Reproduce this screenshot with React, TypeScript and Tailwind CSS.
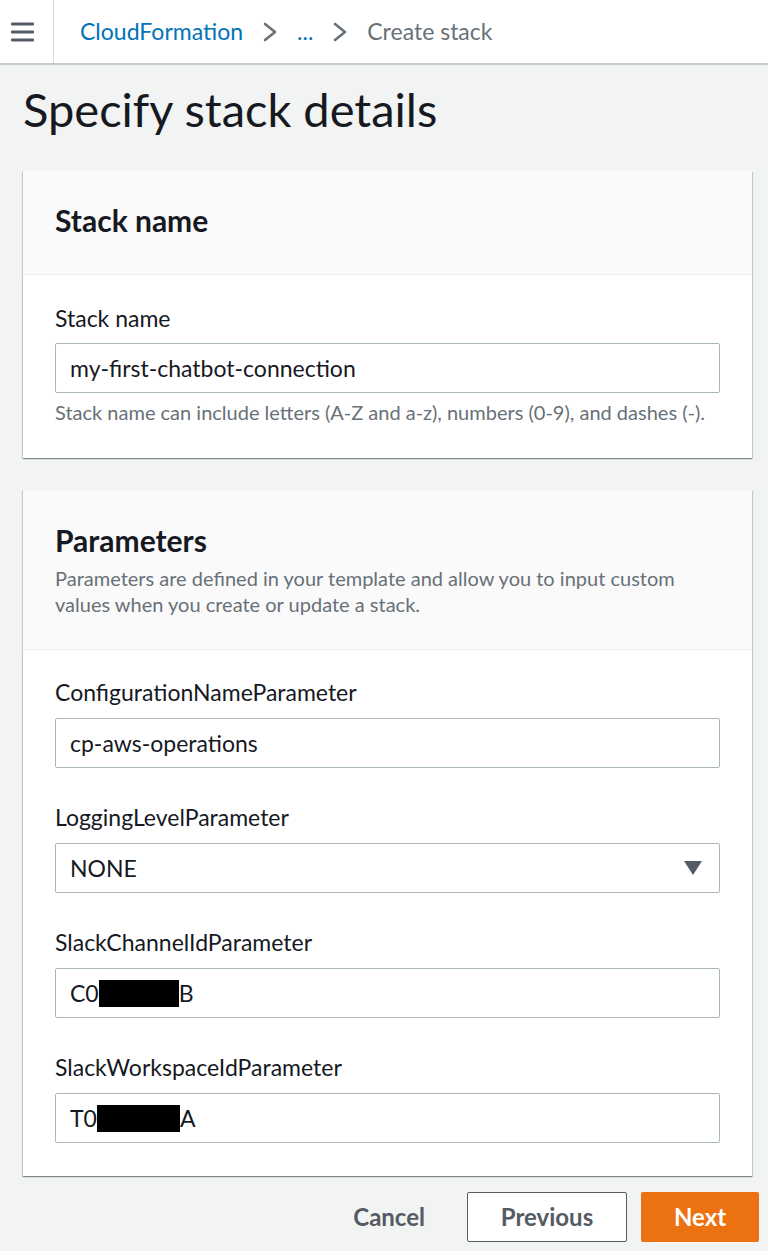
const FONT = "font-['Lato','Noto_Sans',sans-serif]";

function Chevron() {
    return (
        <svg width="16" height="20" viewBox="0 0 16 20" className="mx-[19px] shrink-0">
            <path d="M3 2 L13 10 L3 18" fill="none" stroke="#687078" strokeWidth="2.6" strokeLinecap="round" strokeLinejoin="round" />
        </svg>
    );
}

function Field({ label, value, redact }: { label: string; value?: string; redact?: { pre: string; w: number; post: string } }) {
    return (
        <div>
            <div className="text-[23px] leading-[26px] text-[#16191f] mb-[13px]">{label}</div>
            <div className="h-[50px] border border-[#aab7b8] rounded-[2px] bg-white flex items-center px-[14px] text-[23px] text-[#16191f]">
                {redact ? (
                    <>
                        <span>{redact.pre}</span>
                        <span className="inline-block bg-black h-[27px]" style={{ width: redact.w }} />
                        <span>{redact.post}</span>
                    </>
                ) : value}
            </div>
        </div>
    );
}

export default function App() {
    const cardShadow = 'shadow-[0_1px_1px_0_rgba(0,28,36,0.3),1px_1px_1px_0_rgba(0,28,36,0.15),-1px_1px_1px_0_rgba(0,28,36,0.15)]';

    return (
        <div className={`${FONT} min-h-[1251px] bg-[#f2f3f3] text-[#16191f]`}>
            {/* top bar */}
            <header className="h-[65px] bg-white border-b-2 border-[#c6cbcc] flex items-stretch">
                <div className="w-[54px] border-r border-[#d5dbdb] flex items-center pl-[11px]">
                    <svg width="24" height="20" viewBox="0 0 24 20">
                        <rect x="0" y="0.5" width="23" height="3" rx="1" fill="#545b64" />
                        <rect x="0" y="8.5" width="23" height="3" rx="1" fill="#545b64" />
                        <rect x="0" y="16.5" width="23" height="3" rx="1" fill="#545b64" />
                    </svg>
                </div>
                <nav className="flex items-center pl-[26px] text-[23px]">
                    <span className="text-[#0073bb]">CloudFormation</span>
                    <Chevron />
                    <span className="text-[#0073bb]">...</span>
                    <Chevron />
                    <span className="text-[#687078]">Create stack</span>
                </nav>
            </header>

            <main className="pl-[23px] pr-[16px]">
                <h1 className="pt-[18px] pb-[36px] text-[47px] leading-[52px] font-normal">Specify stack details</h1>

                {/* stack name card */}
                <section className={`bg-white ${cardShadow}`}>
                    <div className="bg-[#fafafa] border-b border-[#eaeded] px-[32px] pt-[33px] pb-[38px]">
                        <h2 className="text-[30px] leading-[32px] font-bold">Stack name</h2>
                    </div>
                    <div className="px-[32px] pt-[30px] pb-[35px]">
                        <div className="text-[23px] leading-[26px] mb-[12px]">Stack name</div>
                        <div className="h-[50px] border border-[#aab7b8] rounded-[2px] flex items-center px-[14px] text-[23px]">
                            my-first-chatbot-connection
                        </div>
                        <p className="mt-[8px] text-[20px] leading-[22px] text-[#687078]">
                            Stack name can include letters (A-Z and a-z), numbers (0-9), and dashes (-).
                        </p>
                    </div>
                </section>

                {/* parameters card */}
                <section className={`mt-[32px] bg-white ${cardShadow}`}>
                    <div className="bg-[#fafafa] border-b border-[#eaeded] px-[32px] pt-[34px] pb-[32px]">
                        <h2 className="text-[30px] leading-[32px] font-bold">Parameters</h2>
                        <p className="mt-[9px] text-[20px] leading-[26px] text-[#687078]">
                            Parameters are defined in your template and allow you to input custom values when you create or update a stack.
                        </p>
                    </div>
                    <div className="px-[32px] pt-[29px] pb-[33px] flex flex-col gap-[36px]">
                        <Field label="ConfigurationNameParameter" value="cp-aws-operations" />
                        <div>
                            <div className="text-[23px] leading-[26px] mb-[13px]">LoggingLevelParameter</div>
                            <div className="h-[50px] border border-[#aab7b8] rounded-[2px] flex items-center justify-between pl-[14px] pr-[17px] text-[23px]">
                                <span>NONE</span>
                                <svg width="18" height="14" viewBox="0 0 18 14">
                                    <path d="M0 0 H18 L9 14 Z" fill="#545b64" />
                                </svg>
                            </div>
                        </div>
                        <Field label="SlackChannelIdParameter" redact={{ pre: 'C0', w: 80, post: 'B' }} />
                        <Field label="SlackWorkspaceIdParameter" redact={{ pre: 'T0', w: 83, post: 'A' }} />
                    </div>
                </section>

                {/* actions */}
                <div className="mt-[16px] flex justify-end items-center gap-[14px] -mr-[7px]">
                    <button className="h-[50px] px-[28px] text-[24px] font-bold text-[#545b64]">Cancel</button>
                    <button className="h-[50px] w-[160px] border border-[#545b64] rounded-[2px] bg-white text-[24px] font-bold text-[#545b64]">Previous</button>
                    <button className="h-[50px] w-[118px] rounded-[2px] bg-[#ec7211] text-[24px] font-bold text-white">Next</button>
                </div>
            </main>
        </div>
    );
}
